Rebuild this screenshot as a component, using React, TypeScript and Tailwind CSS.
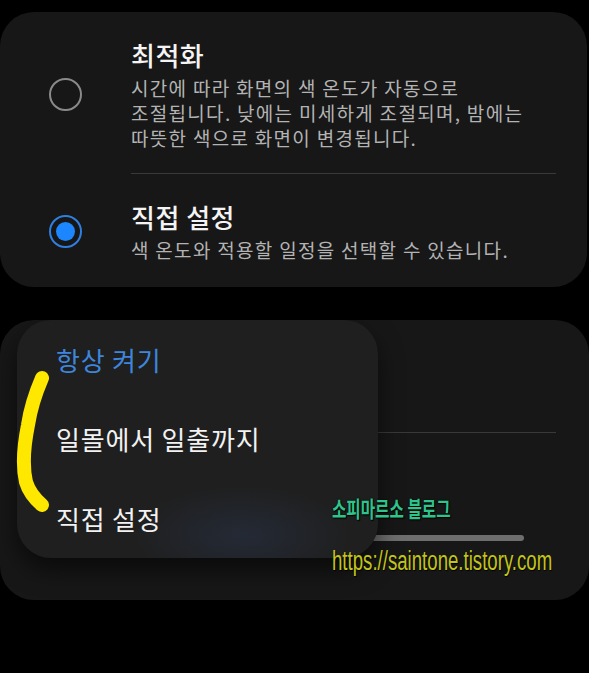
import React from "react";

const font = "font-['Noto_Sans_CJK_KR','Noto_Sans',sans-serif]";

function Radio({ checked }: { checked?: boolean }) {
  if (checked) {
    return (
      <div className="w-[33px] h-[33px] rounded-full border-2 border-[#2f7fe0] flex items-center justify-center">
        <div className="w-[19px] h-[19px] rounded-full bg-[#1c86ff]" />
      </div>
    );
  }
  return <div className="w-[33px] h-[33px] rounded-full border-2 border-[#8a8a8a]" />;
}

export default function App() {
  return (
    <div className={`${font} relative w-[589px] h-[673px] bg-black pt-[12px] overflow-hidden`}>
      {/* Card 1 */}
      <div className="w-[587px] h-[275px] rounded-[34px] bg-[#171717] pt-[27px]">
        <div className="flex items-center">
          <div className="w-[131px] flex justify-center">
            <Radio />
          </div>
          <div className="flex-1 flex flex-col gap-[4px]">
            <div className="text-[26px] leading-[32px] font-medium tracking-[0.5px] text-[#f4f4f4]">최적화</div>
            <div className="text-[19px] leading-[25px] tracking-[1.3px] text-[#b3b3b3] whitespace-nowrap">
              시간에 따라 화면의 색 온도가 자동으로
              <br />
              조절됩니다. 낮에는 미세하게 조절되며, 밤에는
              <br />
              따뜻한 색으로 화면이 변경됩니다.
            </div>
          </div>
        </div>
        <div className="mt-[23px] ml-[131px] mr-[31px] h-px bg-[#393939]" />
        <div className="flex items-center mt-[27px]">
          <div className="w-[131px] flex justify-center">
            <Radio checked />
          </div>
          <div className="flex-1 flex flex-col gap-[4px]">
            <div className="text-[26px] leading-[32px] font-medium tracking-[0.5px] text-[#f4f4f4]">직접 설정</div>
            <div className="text-[19px] leading-[25px] tracking-[1.3px] text-[#b3b3b3] whitespace-nowrap">
              색 온도와 적용할 일정을 선택할 수 있습니다.
            </div>
          </div>
        </div>
      </div>

      {/* Card 2 */}
      <div className="relative mt-[33px] w-[589px] h-[280px] rounded-[34px] bg-[#171717]">
        <div className="pt-[112px] ml-[131px] mr-[33px]">
          <div className="h-px bg-[#393939]" />
          <div className="mt-[102px] mr-[32px] h-[6px] rounded-full bg-[#6e6e6e]" />
        </div>

        {/* Popup menu */}
        <div className="absolute left-[17px] top-0 w-[361px] h-[238px] rounded-[34px] bg-[#1f1f1f] bg-[radial-gradient(ellipse_110px_50px_at_225px_215px,rgba(45,62,95,0.35),transparent)] shadow-[0_12px_24px_rgba(0,0,0,0.55)] flex flex-col">
          <div className="h-[80px] flex items-center pl-[39px] text-[26px] tracking-[0.8px] text-[#3d86dc]">항상 켜기</div>
          <div className="h-[80px] flex items-center pl-[39px] text-[26px] tracking-[0.8px] text-[#f2f2f2]">일몰에서 일출까지</div>
          <div className="h-[80px] flex items-center pl-[39px] text-[26px] tracking-[0.8px] text-[#f2f2f2]">직접 설정</div>
        </div>
      </div>

      {/* Watermark */}
      <div className="absolute left-[332px] top-[491px] text-[22px] leading-[32px] font-bold text-[#2fc48b] scale-x-[0.71] origin-left whitespace-nowrap [text-shadow:0_0_2px_#000,1px_1px_1px_#000]">
        소피마르소 블로그
      </div>
      <div className="absolute left-[332px] top-[544px] font-['Liberation_Sans',sans-serif] text-[27px] leading-[34px] text-[#c2c41c] scale-x-[0.69] origin-left whitespace-nowrap [text-shadow:1px_1px_1px_#000]">
        https://saintone.tistory.com
      </div>

      {/* Yellow marker stroke */}
      <svg className="absolute left-0 top-0" width="589" height="673" viewBox="0 0 589 673">
        <path
          d="M42 378 C36 392 31 405 28 425 C24 445 22 465 26 482 C29 492 35 499 42 505"
          fill="none"
          stroke="#ffe800"
          strokeWidth="14"
          strokeLinecap="round"
          strokeLinejoin="round"
        />
      </svg>
    </div>
  );
}
